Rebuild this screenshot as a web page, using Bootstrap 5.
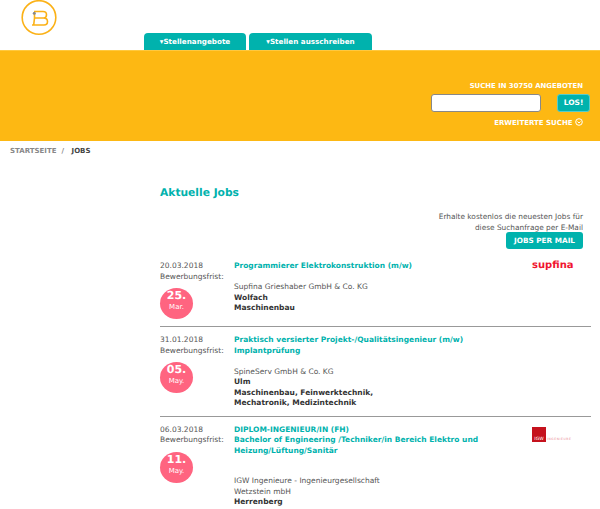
<!DOCTYPE html>
<html lang="de">
<head>
  <meta charset="UTF-8" />
  <title>Aktuelle Jobs</title>
  <link href="https://cdn.jsdelivr.net/npm/bootstrap@5.3.2/dist/css/bootstrap.min.css" rel="stylesheet" />
  <style>
    body {
      font-family: "DejaVu Sans", sans-serif;
      font-size: 7.5px;
      line-height: 10.5px;
      color: #555;
      background: #fff;
      overflow: hidden;
      text-rendering: geometricPrecision;
    }
    .top-head { height: 50px; padding-left: 144px; gap: 3px; }
    .brand-logo { left: 20px; top: 0; }
    .head-tab {
      height: 17px;
      border-radius: 4px 4px 0 0;
      background: #00b2ad;
      color: #fff;
      font-weight: 700;
      font-size: 7.2px;
      line-height: 17px;
      text-decoration: none;
      text-align: center;
    }
    .tab-one { width: 102px; }
    .tab-two { width: 123px; }
    .search-band {
      height: 91px;
      background: #fdb813;
      border-top: 1px solid #ffc93f;
      padding: 30px 10px 0 0;
      color: #fff;
      font-weight: 700;
      font-size: 6.9px;
    }
    .search-label { padding-right: 7px; line-height: 10px; margin-bottom: 3px; }
    .search-input {
      width: 110px;
      height: 18px;
      border: 1px solid #888;
      border-radius: 3px;
      background: #fff;
    }
    .search-btn {
      width: 33px;
      height: 18px;
      padding: 0;
      border: 1px solid #5cc;
      border-radius: 3px;
      background: #00b2ad;
      color: #fff;
      font-size: 7.5px;
      font-weight: 700;
    }
    .search-more { padding-right: 7px; margin-top: 6px; line-height: 10px; font-size: 7px; }
    .more-icon { vertical-align: -1px; }
    .crumb-line {
      height: 45px;
      padding: 5px 0 0 10px;
      font-size: 7px;
      font-weight: 700;
      color: #888;
    }
    .crumb-sep { padding: 0 5px; }
    .crumb-line b { color: #444; }
    .job-area { padding: 0 9px 0 160px; }
    .job-title-main { color: #00b2ad; font-size: 10.7px; line-height: 14px; font-weight: 700; margin: 0 0 12px; }
    .mail-box { text-align: right; padding-right: 8px; height: 41px; font-size: 7.4px; }
    .mail-btn {
      display: inline-block;
      height: 17px;
      width: 77px;
      margin-top: -1px;
      border-radius: 3px;
      background: #00b2ad;
      color: #fff;
      font-size: 7.3px;
      line-height: 17px;
      font-weight: 700;
      text-align: center;
      text-decoration: none;
      vertical-align: top;
    }
    .job-row { border-bottom: 1px solid #999; padding-top: 8px; }
    .job-row:last-child { border-bottom: 0; }
    .job-left { width: 74px; flex: none; padding-bottom: 7px; }
    .job-mid { flex: 1 1 auto; padding-bottom: 7px; }
    .job-logo { width: 84px; flex: none; }
    .job-name { color: #00b2ad; font-weight: 700; text-decoration: none; display: block; }
    .date-circle {
      width: 33px;
      height: 31px;
      border-radius: 50%;
      background: #ff6480;
      color: #fff;
      text-align: center;
      margin-top: 6px;
    }
    .date-day { font-size: 11px; font-weight: 700; line-height: 14px; padding-top: 1px; }
    .date-mon { font-size: 7px; line-height: 9px; }
    .co-name { margin-top: 10.5px; }
    .co-gap { padding-top: 9.5px; }
    .co-place { color: #333; font-weight: 700; }
    .supfina-mark { color: #f0142f; font-size: 10px; line-height: 10px; font-weight: 700; padding: 0 0 0 25px; }
    .igw-wrap { padding: 2px 0 0 25px; }
    .igw-mark {
      width: 14px;
      height: 15px;
      background: #c5121d;
      color: #fff;
      font-size: 4.5px;
      line-height: 5px;
      padding-top: 10px;
      text-align: center;
    }
    .igw-text { color: #e98a90; font-size: 3px; line-height: 6px; letter-spacing: .6px; padding-left: 1px; }
  </style>
</head>
<body>
  <div class="top-head position-relative d-flex align-items-end">
    <svg class="brand-logo position-absolute" width="38" height="37" viewBox="0 0 38 37">
      <circle cx="19" cy="17.500" r="16.800" fill="none" stroke="#fbb116" stroke-width="1.6"/>
      <path d="M14 11.500H23Q26.500 11.500 26.500 14.700Q26.500 18 23.500 18H14.500M23.500 18Q27.500 18 27.500 21.500Q27.500 25 24 25H12M14.500 14V18L13.700 25" fill="none" stroke="#fbb116" stroke-width="1.6"/>
      <circle cx="14.300" cy="13.300" r="1.500" fill="#888"/>
    </svg>
    <a class="head-tab tab-one" href="#">▾Stellenangebote</a>
    <a class="head-tab tab-two" href="#">▾Stellen ausschreiben</a>
  </div>

  <div class="search-band d-flex flex-column align-items-end">
    <div class="search-label">SUCHE IN 30750 ANGEBOTEN</div>
    <div class="d-flex gap-3">
      <input class="search-input" type="text" />
      <button class="search-btn" type="button">LOS!</button>
    </div>
    <div class="search-more">ERWEITERTE SUCHE
      <svg class="more-icon" width="8" height="8" viewBox="0 0 8 8"><circle cx="4" cy="4" r="3.300" fill="none" stroke="#fff" stroke-width="1"/><path d="M2.500 3.500L4 5L5.500 3.500" fill="none" stroke="#fff" stroke-width="1"/></svg>
    </div>
  </div>

  <div class="crumb-line">STARTSEITE<span class="crumb-sep">/</span> <b>JOBS</b></div>

  <div class="job-area">
    <h1 class="job-title-main">Aktuelle Jobs</h1>
    <div class="mail-box">
      Erhalte kostenlos die neuesten Jobs für<br />diese Suchanfrage per E-Mail<br />
      <a class="mail-btn" href="#">JOBS PER MAIL</a>
    </div>

    <div class="job-row d-flex">
      <div class="job-left">
        20.03.2018<br />Bewerbungsfrist:
        <div class="date-circle"><div class="date-day">25.</div><div class="date-mon">Mar.</div></div>
      </div>
      <div class="job-mid">
        <a class="job-name" href="#">Programmierer Elektrokonstruktion (m/w)</a>
        <div class="co-name">Supfina Grieshaber GmbH &amp; Co. KG</div>
        <div class="co-place">Wolfach</div>
        <div class="co-place">Maschinenbau</div>
      </div>
      <div class="job-logo"><div class="supfina-mark">supfina</div></div>
    </div>

    <div class="job-row d-flex">
      <div class="job-left">
        31.01.2018<br />Bewerbungsfrist:
        <div class="date-circle"><div class="date-day">05.</div><div class="date-mon">May.</div></div>
      </div>
      <div class="job-mid">
        <a class="job-name" href="#">Praktisch versierter Projekt-/Qualitätsingenieur (m/w)<br />Implantprüfung</a>
        <div class="co-name">SpineServ GmbH &amp; Co. KG</div>
        <div class="co-place">Ulm</div>
        <div class="co-place">Maschinenbau, Feinwerktechnik,<br />Mechatronik, Medizintechnik</div>
      </div>
      <div class="job-logo"></div>
    </div>

    <div class="job-row d-flex">
      <div class="job-left">
        06.03.2018<br />Bewerbungsfrist:
        <div class="date-circle"><div class="date-day">11.</div><div class="date-mon">May.</div></div>
      </div>
      <div class="job-mid">
        <a class="job-name" href="#">DIPLOM-INGENIEUR/IN (FH)<br />Bachelor of Engineering /Techniker/in Bereich Elektro und<br />Heizung/Lüftung/Sanitär</a>
        <div class="co-name co-gap">IGW Ingenieure - Ingenieurgesellschaft<br />Wetzstein mbH</div>
        <div class="co-place">Herrenberg</div>
      </div>
      <div class="job-logo igw-wrap d-flex align-items-end align-self-start">
        <div class="igw-mark">IGW</div><div class="igw-text">INGENIEURE</div>
      </div>
    </div>
  </div>
  <script src="https://cdn.jsdelivr.net/npm/bootstrap@5.3.2/dist/js/bootstrap.bundle.min.js"></script>
</body>
</html>
